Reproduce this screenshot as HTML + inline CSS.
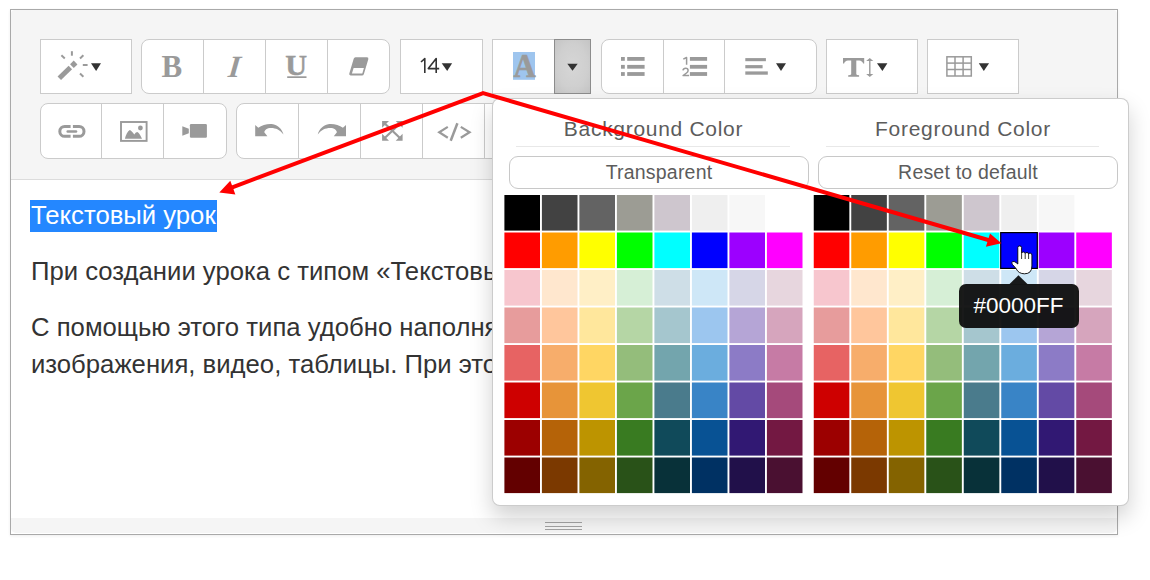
<!DOCTYPE html>
<html><head><meta charset="utf-8">
<style>
html,body{margin:0;padding:0;width:1150px;height:580px;overflow:hidden;background:#fff;}
body{position:relative;font-family:"Liberation Sans",sans-serif;}
.a{position:absolute;box-sizing:border-box;}
#frame{left:10px;top:9px;width:1108px;height:526px;border:1px solid #a9a9a9;box-shadow:0 1px 3px rgba(0,0,0,.07);}
#tb{left:11px;top:10px;width:1106px;height:170px;background:#f5f5f5;border-bottom:1px solid #dcdcdc;border-radius:4px 4px 0 0;}
#sb{left:11px;top:518px;width:1106px;height:15px;background:#f5f5f5;border-radius:0 0 5px 5px;}
.btn{background:#fff;border:1px solid #cbcbcb;}
.dv{position:absolute;top:0;bottom:0;width:1px;background:#cbcbcb;}
.r1{top:39px;height:55px;}
.r2{top:103px;height:56px;}
.rd{border-radius:8px;}
.txt{position:absolute;white-space:pre;font-family:"Liberation Sans",sans-serif;color:#333;font-size:25.7px;line-height:32px;left:31px;}
#pop{left:492px;top:98px;width:637px;height:408px;background:#fff;border:1px solid rgba(0,0,0,.2);border-radius:8px;box-shadow:0 11px 22px rgba(0,0,0,.18);}
.hd{position:absolute;white-space:pre;color:#5c5c5c;font-size:21px;letter-spacing:0.7px;line-height:25px;text-align:center;text-indent:1px;}
.hl{position:absolute;height:1px;background:#e8e8e8;}
.pb{position:absolute;border:1px solid #c8c8c8;border-radius:9px;color:#5c5c5c;font-size:19.5px;letter-spacing:0.2px;text-align:center;box-sizing:border-box;}
.cell{position:absolute;width:36px;height:36px;}
#tip{left:959px;top:284px;width:120px;height:44px;background:rgba(12,12,12,.94);border-radius:7px;color:#fff;font-size:23px;text-align:center;}
</style></head><body>
<div class="a" id="frame"></div>
<div class="a" id="tb"></div>
<div class="a" id="sb"></div>

<!-- row 1 -->
<div class="a btn r1" style="left:40px;width:92px;"></div>
<div class="a btn r1 rd" style="left:141px;width:249px;"><div class="dv" style="left:61px"></div><div class="dv" style="left:123px"></div><div class="dv" style="left:185px"></div></div>
<div class="a btn r1" style="left:400px;width:83px;"></div>
<div class="a btn r1" style="left:492px;width:99px;"></div>
<div class="a r1" style="left:554px;width:37px;border:1px solid #8c8c8c;background:radial-gradient(ellipse at center,#d6d6d6 0%,#cfcfcf 60%,#c4c4c4 100%);"></div>
<div class="a btn r1 rd" style="left:601px;width:216px;"><div class="dv" style="left:61px"></div><div class="dv" style="left:122px"></div></div>
<div class="a btn r1" style="left:826px;width:92px;"></div>
<div class="a btn r1" style="left:927px;width:92px;"></div>
<!-- row 2 -->
<div class="a btn r2 rd" style="left:40px;width:187px;"><div class="dv" style="left:60px"></div><div class="dv" style="left:122px"></div></div>
<div class="a btn r2 rd" style="left:236px;width:312px;"><div class="dv" style="left:61px"></div><div class="dv" style="left:123px"></div><div class="dv" style="left:185px"></div><div class="dv" style="left:247px"></div></div>

<svg class="a" style="left:0;top:0" width="1150" height="580" viewBox="0 0 1150 580" id="ic"><g fill="#9a9a9a" stroke="none">
<!-- wand -->
<line x1="59.3" y1="78.2" x2="70.35" y2="67.5" stroke="#9a9a9a" stroke-width="5"/>
<line x1="71.9" y1="66.1" x2="75.6" y2="62.5" stroke="#9a9a9a" stroke-width="5.3"/>
<g stroke="#9a9a9a" stroke-width="2">
<line x1="71.9" y1="51.2" x2="71.9" y2="55.7"/>
<line x1="61.4" y1="55.3" x2="64.8" y2="58.4"/>
<line x1="83.4" y1="55.3" x2="80" y2="58.4"/>
<line x1="82.8" y1="65" x2="87.6" y2="65"/>
<line x1="80" y1="73.6" x2="83.4" y2="76.7"/>
</g>
<!-- B I U -->
<text x="161.5" y="76.7" font-family="Liberation Serif" font-weight="bold" font-size="31">B</text>
<text x="227.5" y="76.7" font-family="Liberation Serif" font-weight="bold" font-style="italic" font-size="31" transform="translate(227.5,76.7) skewX(-6) translate(-227.5,-76.7)">I</text>
<text x="285.3" y="75.3" font-family="Liberation Serif" font-weight="bold" font-size="27" stroke="#9a9a9a" stroke-width="0.4" transform="translate(285.3,0) scale(1.12,1.1) translate(-285.3,-6.85)">U</text>
<rect x="287.2" y="76.3" width="19.3" height="1.7"/>
<!-- eraser -->
<path d="M355.5,57.3 L367,57.3 Q368.8,57.5 368.3,59.3 L363.9,74 Q363.4,75.5 362,75.5 L350.6,75.5 Q348.8,75.3 349.3,73.6 L353.7,58.8 Q354.1,57.4 355.5,57.3 Z"/>
<path fill="#fff" d="M353.6,67.9 L363.9,67.9 L362.3,73.6 L351.9,73.6 Z"/>
<!-- 14 -->
<g fill="none" stroke="#333" stroke-width="1.6" stroke-linejoin="round"><path d="M421,62 L424.8,58.6 L424.8,72.9"/><path d="M439.2,68.6 L428.3,68.6 L436.2,58.6 L436.2,72.9"/></g>
<!-- A -->
<rect x="513" y="52" width="22" height="27.8" fill="#9ec5ee"/>
<text x="513.5" y="76.8" font-family="Liberation Serif" font-weight="bold" font-size="33.5" stroke="#9a9a9a" stroke-width="0.6" transform="translate(513.5,76.8) scale(0.92,1) translate(-513.5,-76.8)">A</text>
<!-- UL -->
<rect x="621" y="57" width="3.8" height="3.8"/><rect x="627.2" y="57" width="17.4" height="3.8"/>
<rect x="621" y="64.9" width="3.8" height="3.8"/><rect x="627.2" y="64.9" width="17.4" height="3.8"/>
<rect x="621" y="72.1" width="3.8" height="3.8"/><rect x="627.2" y="72.1" width="17.4" height="3.8"/>
<!-- OL -->
<g fill="none" stroke="#9a9a9a" stroke-width="1.5" stroke-linejoin="round"><path d="M683.3,59.2 L686.6,57.5 L686.6,64.8"/><path d="M682.9,70.3 Q683.4,68.2 685.6,68.2 Q688.1,68.2 688.1,70.4 Q688.1,71.8 686.5,73 L683.1,75.5 L689.1,75.5"/></g>
<rect x="689.9" y="57" width="17.2" height="3.8"/>
<rect x="689.9" y="64.9" width="17.2" height="3.8"/>
<rect x="689.9" y="72.1" width="17.2" height="3.8"/>
<!-- align -->
<rect x="745.3" y="58.1" width="20.6" height="3.1"/>
<rect x="745.3" y="65.1" width="17.3" height="3.2"/>
<rect x="745.3" y="71.4" width="22.5" height="3.3"/>
<!-- T arrows -->
<path d="M843,57.9 H864.2 V63.6 H863.1 Q862.3,60.6 859.2,60.4 H856.3 V74.3 Q856.6,75.1 859.1,75.2 V76.8 H848.2 V75.2 Q850.8,75.1 851.2,74.3 V60.4 H848 Q844.9,60.6 844.1,63.6 H843 Z"/>
<rect x="869.1" y="59.5" width="1.4" height="16"/>
<path d="M869.8,57.9 L873.3,60.9 L866.2,60.9 Z"/>
<path d="M869.8,76.9 L873.3,74 L866.2,74 Z"/>
<!-- table -->
<g fill="none" stroke="#9a9a9a" stroke-width="1.5">
<rect x="946.9" y="56.8" width="24.4" height="19.2"/>
<line x1="955" y1="56.8" x2="955" y2="76"/><line x1="963.1" y1="56.8" x2="963.1" y2="76"/>
<line x1="946.9" y1="63.1" x2="971.3" y2="63.1"/><line x1="946.9" y1="69.5" x2="971.3" y2="69.5"/>
</g>
<!-- carets -->
<g fill="#333">
<path d="M91,63.3 L101,63.3 L96.1,70.9 Z"/>
<path d="M441.7,63.3 L452.1,63.3 L447.2,70.9 Z"/>
<path d="M567.3,63.7 L577.7,63.7 L572.5,70.8 Z"/>
<path d="M776,63.3 L786,63.3 L781,70.9 Z"/>
<path d="M877,63.3 L887.4,63.3 L882.4,70.9 Z"/>
<path d="M978.8,63.3 L989.1,63.3 L983.8,70.9 Z"/>
</g>
<!-- link -->
<g fill="none" stroke="#9a9a9a" stroke-width="3">
<path d="M70.6,126.5 H64.7 A4.9,4.9 0 0 0 64.7,136.3 H70.6"/>
<path d="M72.9,126.5 H79.1 A4.9,4.9 0 0 1 79.1,136.3 H72.9"/>
</g>
<line x1="67.7" y1="131.55" x2="76" y2="131.55" stroke="#9a9a9a" stroke-width="2.5" stroke-linecap="round"/>
<!-- picture -->
<rect x="121" y="122" width="25.6" height="18.9" fill="none" stroke="#9a9a9a" stroke-width="1.9"/>
<path d="M124.9,138.7 Q126.5,132 129.8,129.9 Q131.5,130.5 134.3,134.6 Q135.5,132.5 137.1,132.1 Q139,132.5 142,138.7 Z"/>
<circle cx="140.4" cy="128" r="2.4"/>
<!-- video -->
<path d="M182.3,126.3 L188.8,128.8 L188.8,133.2 L182.3,135.7 Z"/>
<rect x="189.9" y="124.1" width="17" height="13.6" rx="1.2"/>
<!-- undo / redo -->
<path d="M255.2,125 L258.3,127.8 C262,125 268,123.5 273,124.2 C278,125 282,129 283.5,134.5 C280,130 276,128 271,128 C267,128 264.5,130 264.3,132.3 L267.4,136.2 L255.2,136.2 Z"/>
<path d="M346,125 L342.9,127.8 C339.2,125 333.2,123.5 328.2,124.2 C323.2,125 319.2,129 317.7,134.5 C321.2,130 325.2,128 330.2,128 C334.2,128 336.7,130 336.9,132.3 L333.8,136.2 L346,136.2 Z"/>
<!-- fullscreen -->
<path d="M382.1,120.9 L389,120.9 L382.1,127.8 Z M402.6,120.9 L395.7,120.9 L402.6,127.8 Z M382.1,140.7 L389,140.7 L382.1,133.8 Z M402.6,140.7 L395.7,140.7 L402.6,133.8 Z"/>
<g stroke="#9a9a9a" stroke-width="2.2">
<line x1="384.5" y1="123.3" x2="400.2" y2="138.3"/><line x1="400.2" y1="123.3" x2="384.5" y2="138.3"/>
</g>
<!-- code -->
<g fill="none" stroke="#9a9a9a" stroke-width="2.2">
<path d="M447.8,126.9 L439.2,132.3 L447.8,137.8"/>
<path d="M460.8,126.9 L469.6,132.3 L460.8,137.8"/>
<line x1="457.4" y1="123.2" x2="450.7" y2="140.8" stroke-width="2.5"/>
</g>
</g>
</svg>
<!-- text -->
<div class="a" style="left:30px;top:200px;width:187px;height:32px;background:#2487ff;"></div>
<div class="txt" style="top:199px;color:#fff;">Текстовый урок</div>
<div class="txt" style="top:255px;">При создании урока с типом «Текстовый»</div>
<div class="txt" style="top:311px;">С помощью этого типа удобно наполнять</div>
<div class="txt" style="top:348px;">изображения, видео, таблицы. При этом</div>

<!-- handle -->
<div class="a" style="left:545px;top:522px;width:37px;height:1px;background:#a3a3a3;"></div>
<div class="a" style="left:545px;top:526px;width:37px;height:1px;background:#a3a3a3;"></div>
<div class="a" style="left:545px;top:529px;width:37px;height:1px;background:#a3a3a3;"></div>

<!-- popup -->
<div class="a" id="pop"></div>
<div class="hd" style="left:516px;width:274px;top:116px;">Background Color</div>
<div class="hl" style="left:516px;width:274px;top:146px;"></div>
<div class="pb" style="left:509px;top:156px;width:300px;height:33px;line-height:31px;">Transparent</div>
<div class="hd" style="left:826px;width:273px;top:116px;">Foreground Color</div>
<div class="hl" style="left:826px;width:273px;top:146px;"></div>
<div class="pb" style="left:818px;top:156px;width:300px;height:33px;line-height:31px;">Reset to default</div>
<div id="grid"><svg class="a" style="left:0;top:0" width="1150" height="580"><rect x="504.40" y="195.00" width="35.6" height="35.6" fill="#000000"/><rect x="541.90" y="195.00" width="35.6" height="35.6" fill="#424242"/><rect x="579.40" y="195.00" width="35.6" height="35.6" fill="#636363"/><rect x="616.90" y="195.00" width="35.6" height="35.6" fill="#9C9C94"/><rect x="654.40" y="195.00" width="35.6" height="35.6" fill="#CEC6CE"/><rect x="691.90" y="195.00" width="35.6" height="35.6" fill="#EFEFEF"/><rect x="729.40" y="195.00" width="35.6" height="35.6" fill="#F7F7F7"/><rect x="766.90" y="195.00" width="35.6" height="35.6" fill="#FFFFFF"/><rect x="504.40" y="232.50" width="35.6" height="35.6" fill="#FF0000"/><rect x="541.90" y="232.50" width="35.6" height="35.6" fill="#FF9C00"/><rect x="579.40" y="232.50" width="35.6" height="35.6" fill="#FFFF00"/><rect x="616.90" y="232.50" width="35.6" height="35.6" fill="#00FF00"/><rect x="654.40" y="232.50" width="35.6" height="35.6" fill="#00FFFF"/><rect x="691.90" y="232.50" width="35.6" height="35.6" fill="#0000FF"/><rect x="729.40" y="232.50" width="35.6" height="35.6" fill="#9C00FF"/><rect x="766.90" y="232.50" width="35.6" height="35.6" fill="#FF00FF"/><rect x="504.40" y="270.00" width="35.6" height="35.6" fill="#F7C6CE"/><rect x="541.90" y="270.00" width="35.6" height="35.6" fill="#FFE7CE"/><rect x="579.40" y="270.00" width="35.6" height="35.6" fill="#FFEFC6"/><rect x="616.90" y="270.00" width="35.6" height="35.6" fill="#D6EFD6"/><rect x="654.40" y="270.00" width="35.6" height="35.6" fill="#CEDEE7"/><rect x="691.90" y="270.00" width="35.6" height="35.6" fill="#CEE7F7"/><rect x="729.40" y="270.00" width="35.6" height="35.6" fill="#D6D6E7"/><rect x="766.90" y="270.00" width="35.6" height="35.6" fill="#E7D6DE"/><rect x="504.40" y="307.50" width="35.6" height="35.6" fill="#E79C9C"/><rect x="541.90" y="307.50" width="35.6" height="35.6" fill="#FFC69C"/><rect x="579.40" y="307.50" width="35.6" height="35.6" fill="#FFE79C"/><rect x="616.90" y="307.50" width="35.6" height="35.6" fill="#B5D6A5"/><rect x="654.40" y="307.50" width="35.6" height="35.6" fill="#A5C6CE"/><rect x="691.90" y="307.50" width="35.6" height="35.6" fill="#9CC6EF"/><rect x="729.40" y="307.50" width="35.6" height="35.6" fill="#B5A5D6"/><rect x="766.90" y="307.50" width="35.6" height="35.6" fill="#D6A5BD"/><rect x="504.40" y="345.00" width="35.6" height="35.6" fill="#E76363"/><rect x="541.90" y="345.00" width="35.6" height="35.6" fill="#F7AD6B"/><rect x="579.40" y="345.00" width="35.6" height="35.6" fill="#FFD663"/><rect x="616.90" y="345.00" width="35.6" height="35.6" fill="#94BD7B"/><rect x="654.40" y="345.00" width="35.6" height="35.6" fill="#73A5AD"/><rect x="691.90" y="345.00" width="35.6" height="35.6" fill="#6BADDE"/><rect x="729.40" y="345.00" width="35.6" height="35.6" fill="#8C7BC6"/><rect x="766.90" y="345.00" width="35.6" height="35.6" fill="#C67BA5"/><rect x="504.40" y="382.50" width="35.6" height="35.6" fill="#CE0000"/><rect x="541.90" y="382.50" width="35.6" height="35.6" fill="#E79439"/><rect x="579.40" y="382.50" width="35.6" height="35.6" fill="#EFC631"/><rect x="616.90" y="382.50" width="35.6" height="35.6" fill="#6BA54A"/><rect x="654.40" y="382.50" width="35.6" height="35.6" fill="#4A7B8C"/><rect x="691.90" y="382.50" width="35.6" height="35.6" fill="#3984C6"/><rect x="729.40" y="382.50" width="35.6" height="35.6" fill="#634AA5"/><rect x="766.90" y="382.50" width="35.6" height="35.6" fill="#A54A7B"/><rect x="504.40" y="420.00" width="35.6" height="35.6" fill="#9C0000"/><rect x="541.90" y="420.00" width="35.6" height="35.6" fill="#B56308"/><rect x="579.40" y="420.00" width="35.6" height="35.6" fill="#BD9400"/><rect x="616.90" y="420.00" width="35.6" height="35.6" fill="#397B21"/><rect x="654.40" y="420.00" width="35.6" height="35.6" fill="#104A5A"/><rect x="691.90" y="420.00" width="35.6" height="35.6" fill="#085294"/><rect x="729.40" y="420.00" width="35.6" height="35.6" fill="#311873"/><rect x="766.90" y="420.00" width="35.6" height="35.6" fill="#731842"/><rect x="504.40" y="457.50" width="35.6" height="35.6" fill="#630000"/><rect x="541.90" y="457.50" width="35.6" height="35.6" fill="#7B3900"/><rect x="579.40" y="457.50" width="35.6" height="35.6" fill="#846300"/><rect x="616.90" y="457.50" width="35.6" height="35.6" fill="#295218"/><rect x="654.40" y="457.50" width="35.6" height="35.6" fill="#083139"/><rect x="691.90" y="457.50" width="35.6" height="35.6" fill="#003163"/><rect x="729.40" y="457.50" width="35.6" height="35.6" fill="#21104A"/><rect x="766.90" y="457.50" width="35.6" height="35.6" fill="#4A1031"/><rect x="813.75" y="195.00" width="35.6" height="35.6" fill="#000000"/><rect x="851.25" y="195.00" width="35.6" height="35.6" fill="#424242"/><rect x="888.75" y="195.00" width="35.6" height="35.6" fill="#636363"/><rect x="926.25" y="195.00" width="35.6" height="35.6" fill="#9C9C94"/><rect x="963.75" y="195.00" width="35.6" height="35.6" fill="#CEC6CE"/><rect x="1001.25" y="195.00" width="35.6" height="35.6" fill="#EFEFEF"/><rect x="1038.75" y="195.00" width="35.6" height="35.6" fill="#F7F7F7"/><rect x="1076.25" y="195.00" width="35.6" height="35.6" fill="#FFFFFF"/><rect x="813.75" y="232.50" width="35.6" height="35.6" fill="#FF0000"/><rect x="851.25" y="232.50" width="35.6" height="35.6" fill="#FF9C00"/><rect x="888.75" y="232.50" width="35.6" height="35.6" fill="#FFFF00"/><rect x="926.25" y="232.50" width="35.6" height="35.6" fill="#00FF00"/><rect x="963.75" y="232.50" width="35.6" height="35.6" fill="#00FFFF"/><rect x="1001.25" y="232.50" width="35.6" height="35.6" fill="#0000FF"/><rect x="1038.75" y="232.50" width="35.6" height="35.6" fill="#9C00FF"/><rect x="1076.25" y="232.50" width="35.6" height="35.6" fill="#FF00FF"/><rect x="813.75" y="270.00" width="35.6" height="35.6" fill="#F7C6CE"/><rect x="851.25" y="270.00" width="35.6" height="35.6" fill="#FFE7CE"/><rect x="888.75" y="270.00" width="35.6" height="35.6" fill="#FFEFC6"/><rect x="926.25" y="270.00" width="35.6" height="35.6" fill="#D6EFD6"/><rect x="963.75" y="270.00" width="35.6" height="35.6" fill="#CEDEE7"/><rect x="1001.25" y="270.00" width="35.6" height="35.6" fill="#CEE7F7"/><rect x="1038.75" y="270.00" width="35.6" height="35.6" fill="#D6D6E7"/><rect x="1076.25" y="270.00" width="35.6" height="35.6" fill="#E7D6DE"/><rect x="813.75" y="307.50" width="35.6" height="35.6" fill="#E79C9C"/><rect x="851.25" y="307.50" width="35.6" height="35.6" fill="#FFC69C"/><rect x="888.75" y="307.50" width="35.6" height="35.6" fill="#FFE79C"/><rect x="926.25" y="307.50" width="35.6" height="35.6" fill="#B5D6A5"/><rect x="963.75" y="307.50" width="35.6" height="35.6" fill="#A5C6CE"/><rect x="1001.25" y="307.50" width="35.6" height="35.6" fill="#9CC6EF"/><rect x="1038.75" y="307.50" width="35.6" height="35.6" fill="#B5A5D6"/><rect x="1076.25" y="307.50" width="35.6" height="35.6" fill="#D6A5BD"/><rect x="813.75" y="345.00" width="35.6" height="35.6" fill="#E76363"/><rect x="851.25" y="345.00" width="35.6" height="35.6" fill="#F7AD6B"/><rect x="888.75" y="345.00" width="35.6" height="35.6" fill="#FFD663"/><rect x="926.25" y="345.00" width="35.6" height="35.6" fill="#94BD7B"/><rect x="963.75" y="345.00" width="35.6" height="35.6" fill="#73A5AD"/><rect x="1001.25" y="345.00" width="35.6" height="35.6" fill="#6BADDE"/><rect x="1038.75" y="345.00" width="35.6" height="35.6" fill="#8C7BC6"/><rect x="1076.25" y="345.00" width="35.6" height="35.6" fill="#C67BA5"/><rect x="813.75" y="382.50" width="35.6" height="35.6" fill="#CE0000"/><rect x="851.25" y="382.50" width="35.6" height="35.6" fill="#E79439"/><rect x="888.75" y="382.50" width="35.6" height="35.6" fill="#EFC631"/><rect x="926.25" y="382.50" width="35.6" height="35.6" fill="#6BA54A"/><rect x="963.75" y="382.50" width="35.6" height="35.6" fill="#4A7B8C"/><rect x="1001.25" y="382.50" width="35.6" height="35.6" fill="#3984C6"/><rect x="1038.75" y="382.50" width="35.6" height="35.6" fill="#634AA5"/><rect x="1076.25" y="382.50" width="35.6" height="35.6" fill="#A54A7B"/><rect x="813.75" y="420.00" width="35.6" height="35.6" fill="#9C0000"/><rect x="851.25" y="420.00" width="35.6" height="35.6" fill="#B56308"/><rect x="888.75" y="420.00" width="35.6" height="35.6" fill="#BD9400"/><rect x="926.25" y="420.00" width="35.6" height="35.6" fill="#397B21"/><rect x="963.75" y="420.00" width="35.6" height="35.6" fill="#104A5A"/><rect x="1001.25" y="420.00" width="35.6" height="35.6" fill="#085294"/><rect x="1038.75" y="420.00" width="35.6" height="35.6" fill="#311873"/><rect x="1076.25" y="420.00" width="35.6" height="35.6" fill="#731842"/><rect x="813.75" y="457.50" width="35.6" height="35.6" fill="#630000"/><rect x="851.25" y="457.50" width="35.6" height="35.6" fill="#7B3900"/><rect x="888.75" y="457.50" width="35.6" height="35.6" fill="#846300"/><rect x="926.25" y="457.50" width="35.6" height="35.6" fill="#295218"/><rect x="963.75" y="457.50" width="35.6" height="35.6" fill="#083139"/><rect x="1001.25" y="457.50" width="35.6" height="35.6" fill="#003163"/><rect x="1038.75" y="457.50" width="35.6" height="35.6" fill="#21104A"/><rect x="1076.25" y="457.50" width="35.6" height="35.6" fill="#4A1031"/></svg></div>

<div class="a" id="tip"></div>
<svg class="a" style="left:0;top:0" width="1150" height="580" viewBox="0 0 1150 580" id="ov"><!-- hovered cell -->
<rect x="1000.7" y="232.6" width="36.6" height="35.8" fill="#0000FF" stroke="#000" stroke-width="1.2"/>
<!-- tooltip arrow -->
<path d="M1009.3,284.2 L1018.4,275.3 L1027.7,284.2 Z" fill="rgba(12,12,12,.94)"/>
<text x="1018.5" y="313.2" text-anchor="middle" font-family="Liberation Sans" font-size="22.5" fill="#fff">#0000FF</text>
<!-- red arrows -->
<g stroke="#ff0000" stroke-width="4" fill="none" stroke-linecap="round" stroke-linejoin="round">
<polyline points="229,188.6 483.1,93.1 990,240.5"/>
</g>
<path d="M219.3,192.4 L230.3,180.8 L235.4,194.5 Z" fill="#ff0000"/>
<path d="M1001.4,243.3 L990,233.5 L985.9,246.7 Z" fill="#ff0000"/>
<!-- hand -->
<g fill="#fff" stroke="#000" stroke-width="0.9">
<path d="M1017.8,247.5 Q1017.8,245.9 1019.7,245.9 Q1021.6,245.9 1021.6,247.5 L1021.6,253 Q1022,252 1023.5,252 Q1025,252 1025.2,253.5 Q1025.6,252.5 1027,252.5 Q1028.5,252.5 1028.6,254 Q1029,253.2 1030.3,253.2 Q1031.9,253.3 1031.9,255 L1031.9,266 Q1031.9,273.8 1024.5,273.8 Q1018.5,273.8 1016,268.5 L1012.5,264.5 Q1011,262.5 1012.3,261.8 Q1014,260.8 1016,262.5 L1017.8,264 Z"/>
</g>
<g stroke="#000" stroke-width="0.8">
<line x1="1021.6" y1="253" x2="1021.6" y2="259"/><line x1="1025.2" y1="253.5" x2="1025.2" y2="259"/><line x1="1028.6" y1="254" x2="1028.6" y2="259"/>
</g>
</svg>
</body></html>
